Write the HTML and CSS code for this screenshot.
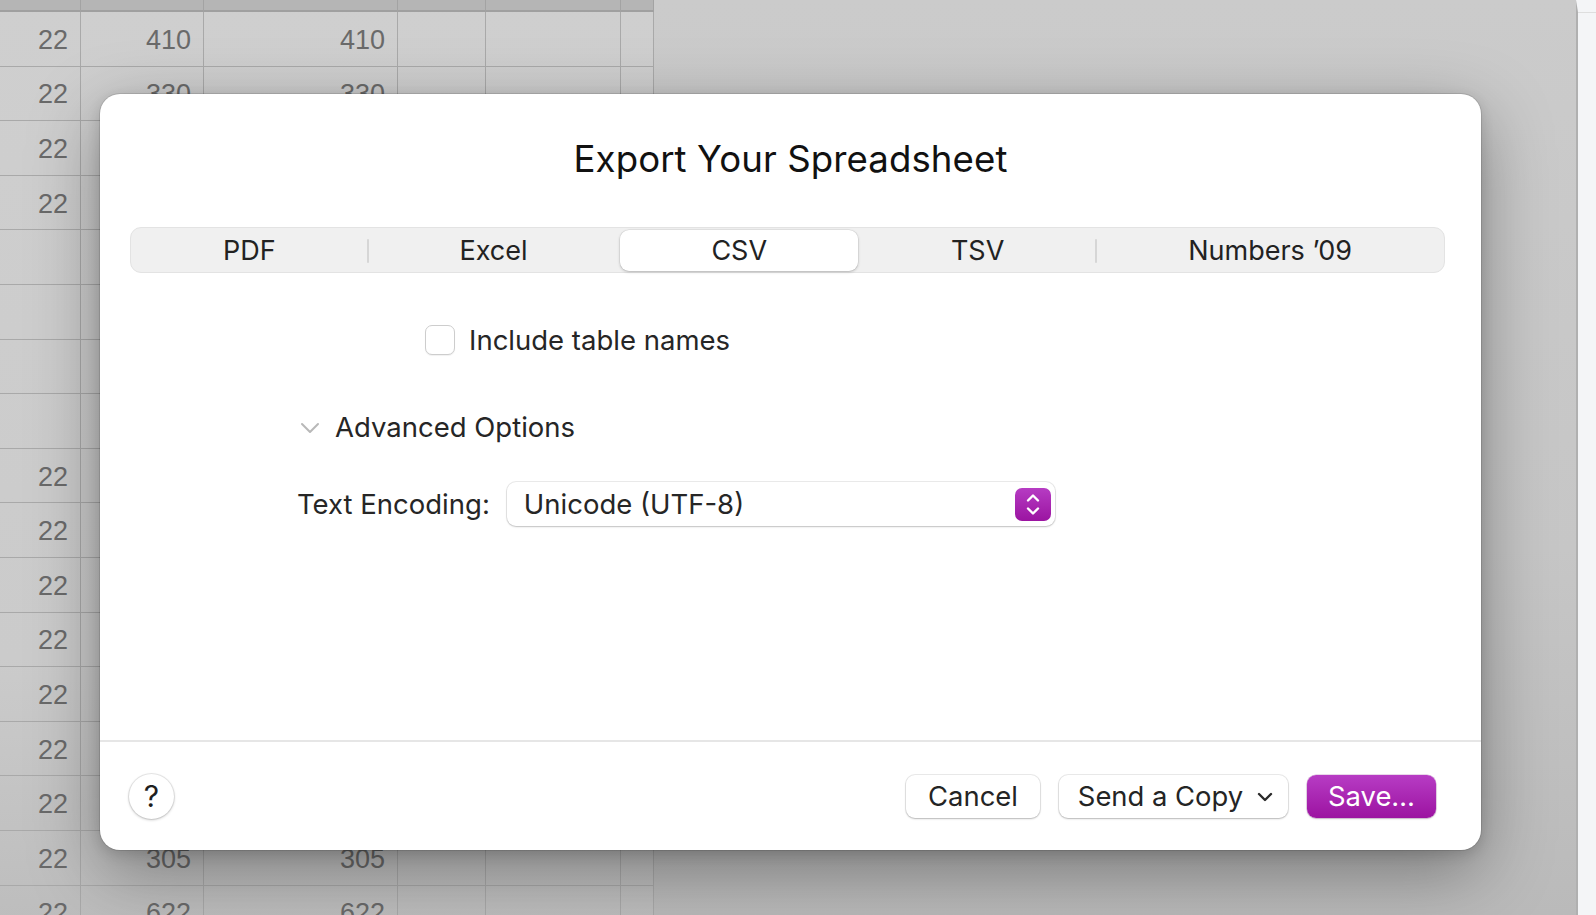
FILE: index.html
```html
<!DOCTYPE html>
<html lang="en">
<head>
<meta charset="utf-8">
<title>Export Your Spreadsheet</title>
<link rel="stylesheet" href="styles.css">
</head>
<body>
<div class="screen">
  <div class="workspace">
    <div class="sheet">
      <div class="hcell"></div><div class="hcell"></div><div class="hcell"></div><div class="hcell"></div><div class="hcell"></div><div class="hcell"></div>

      <div class="cell">22</div><div class="cell">410</div><div class="cell">410</div><div class="cell"></div><div class="cell"></div><div class="cell"></div>
      <div class="cell">22</div><div class="cell">330</div><div class="cell">330</div><div class="cell"></div><div class="cell"></div><div class="cell"></div>
      <div class="cell">22</div><div class="cell"></div><div class="cell"></div><div class="cell"></div><div class="cell"></div><div class="cell"></div>
      <div class="cell">22</div><div class="cell"></div><div class="cell"></div><div class="cell"></div><div class="cell"></div><div class="cell"></div>
      <div class="cell"></div><div class="cell"></div><div class="cell"></div><div class="cell"></div><div class="cell"></div><div class="cell"></div>
      <div class="cell"></div><div class="cell"></div><div class="cell"></div><div class="cell"></div><div class="cell"></div><div class="cell"></div>
      <div class="cell"></div><div class="cell"></div><div class="cell"></div><div class="cell"></div><div class="cell"></div><div class="cell"></div>
      <div class="cell"></div><div class="cell"></div><div class="cell"></div><div class="cell"></div><div class="cell"></div><div class="cell"></div>
      <div class="cell">22</div><div class="cell"></div><div class="cell"></div><div class="cell"></div><div class="cell"></div><div class="cell"></div>
      <div class="cell">22</div><div class="cell"></div><div class="cell"></div><div class="cell"></div><div class="cell"></div><div class="cell"></div>
      <div class="cell">22</div><div class="cell"></div><div class="cell"></div><div class="cell"></div><div class="cell"></div><div class="cell"></div>
      <div class="cell">22</div><div class="cell"></div><div class="cell"></div><div class="cell"></div><div class="cell"></div><div class="cell"></div>
      <div class="cell">22</div><div class="cell"></div><div class="cell"></div><div class="cell"></div><div class="cell"></div><div class="cell"></div>
      <div class="cell">22</div><div class="cell"></div><div class="cell"></div><div class="cell"></div><div class="cell"></div><div class="cell"></div>
      <div class="cell">22</div><div class="cell"></div><div class="cell"></div><div class="cell"></div><div class="cell"></div><div class="cell"></div>
      <div class="cell">22</div><div class="cell">305</div><div class="cell">305</div><div class="cell"></div><div class="cell"></div><div class="cell"></div>
      <div class="cell">22</div><div class="cell">622</div><div class="cell">622</div><div class="cell"></div><div class="cell"></div><div class="cell"></div>
    </div>

    <div class="dialog">
      <h1 class="title">Export Your Spreadsheet</h1>

      <div class="segmented">
        <div class="seg">PDF</div>
        <span class="sep"></span>
        <div class="seg">Excel</div>
        <span class="sep hidden"></span>
        <div class="seg selected">CSV</div>
        <span class="sep hidden"></span>
        <div class="seg">TSV</div>
        <span class="sep"></span>
        <div class="seg">Numbers ’09</div>
      </div>

      <div class="options">
        <label class="check-row">
          <span class="checkbox"></span>
          <span class="check-label">Include table names</span>
        </label>

        <div class="disclosure-row">
          <svg class="disclosure" width="20" height="12" viewBox="0 0 20 12"><path d="M2 2 L10 10 L18 2" fill="none" stroke="#b8b8b8" stroke-width="2" stroke-linecap="round" stroke-linejoin="round"/></svg>
          <span class="disclosure-label">Advanced Options</span>
        </div>

        <div class="encoding-row">
          <span class="field-label">Text Encoding:</span>
          <div class="popup">
            <span class="popup-value">Unicode (UTF-8)</span>
            <span class="stepper">
              <svg width="36" height="33" viewBox="0 0 36 33"><path d="M13 12.5 L18 7.5 L23 12.5" fill="none" stroke="#fff" stroke-width="2.4" stroke-linecap="round" stroke-linejoin="round"/><path d="M13 20.5 L18 25.5 L23 20.5" fill="none" stroke="#fff" stroke-width="2.4" stroke-linecap="round" stroke-linejoin="round"/></svg>
            </span>
          </div>
        </div>
      </div>

      <div class="footer">
        <div class="help">?</div>
        <div class="actions">
          <div class="btn cancel">Cancel</div>
          <div class="btn send">Send a Copy
            <svg class="btn-chevron" width="16" height="10" viewBox="0 0 16 10"><path d="M2 2 L8 8 L14 2" fill="none" stroke="#2a2a2a" stroke-width="2.4" stroke-linecap="round" stroke-linejoin="round"/></svg>
          </div>
          <div class="btn primary">Save…</div>
        </div>
      </div>
    </div>
  </div>
  <div class="scrollbar"></div>
</div>
</body>
</html>
```

FILE: styles.css
```css
* { box-sizing: border-box; }

html, body {
  margin: 0;
  padding: 0;
  width: 1596px;
  height: 915px;
  overflow: hidden;
}

body {
  font-family: Inter, "Liberation Sans", sans-serif;
  color: #262626;
}

.screen {
  display: flex;
  width: 1596px;
  height: 915px;
  overflow: hidden;
}

.workspace {
  position: relative;
  flex: 1;
  height: 915px;
  overflow: hidden;
  background: linear-gradient(180deg, #cbcbcb 0%, #c6c6c6 60%, #bababa 100%);
}

/* ---------- spreadsheet behind ---------- */
.sheet {
  display: grid;
  grid-template-columns: 81px 123px 194px 88px 135px 33px;
  grid-auto-rows: 54.6px;
  grid-template-rows: 12px;
  width: 654px;
  background: linear-gradient(180deg, #cfcfcf 0%, #cbcbcb 70%, #bcbcbc 100%);
  font-family: "Liberation Sans", Arial, sans-serif;
}

.hcell {
  background: #b5b5b5;
  border-right: 1px solid #a3a3a3;
  border-bottom: 2px solid #a0a0a0;
}

.cell {
  display: flex;
  align-items: center;
  justify-content: flex-end;
  padding: 3px 12px 0 0;
  font-size: 27px;
  color: #6a6a6a;
  border-right: 1px solid #a9a9a9;
  border-bottom: 1px solid #a9a9a9;
}

/* ---------- right scroll strip ---------- */
.scrollbar {
  width: 20px;
  height: 915px;
  background: #f4f5f7;
  border-left: 2px solid #b0b0b0;
  border-top: 12px solid #f4f5f7;
  box-shadow: inset 0 1px 0 #dedede;
}

/* ---------- dialog ---------- */
.dialog {
  position: absolute;
  left: 100px;
  top: 94px;
  width: 1381px;
  height: 756px;
  background: #ffffff;
  border-radius: 20px;
  box-shadow: 0 0 0 1px rgba(0, 0, 0, 0.10), 0 22px 70px rgba(0, 0, 0, 0.36), 0 4px 14px rgba(0, 0, 0, 0.14);
  display: flex;
  flex-direction: column;
}

.title {
  margin: 43px 0 0;
  height: 44px;
  line-height: 44px;
  text-align: center;
  font-size: 36.6px;
  font-weight: 400;
  color: #111111;
  letter-spacing: 0.1px;
}

.segmented {
  margin: 46px 36px 0 30px;
  height: 46px;
  display: flex;
  align-items: center;
  padding: 2px 1px 1px;
  background: #f0f0f0;
  border: 1px solid #e3e3e3;
  border-radius: 11px;
}

.seg {
  flex: 1 1 auto;
  height: 100%;
  display: flex;
  align-items: center;
  justify-content: center;
  padding: 0 60px;
  font-size: 27px;
  color: #222222;
  border-radius: 9px;
}

.seg.selected {
  background: #ffffff;
  box-shadow: 0 0 0 0.5px rgba(0, 0, 0, 0.08), 0 1px 3px rgba(0, 0, 0, 0.22);
}

.sep {
  flex: none;
  width: 2px;
  height: 24px;
  background: #d6d6d6;
  border-radius: 1px;
}

.sep.hidden { background: transparent; }

.options {
  flex: 1;
  display: flex;
  flex-direction: column;
  padding-top: 52px;
}

.check-row {
  display: flex;
  align-items: center;
  height: 30px;
  margin-left: 325px;
  gap: 14px;
}

.checkbox {
  width: 30px;
  height: 30px;
  border-radius: 7px;
  background: #ffffff;
  border: 1px solid #cdcdcd;
  box-shadow: 0 1px 1px rgba(0, 0, 0, 0.06);
}

.check-label,
.disclosure-label,
.field-label,
.popup-value {
  font-size: 27.5px;
  color: #262626;
}

.disclosure-row {
  display: flex;
  align-items: center;
  height: 34px;
  margin-top: 55px;
  margin-left: 200px;
  gap: 15px;
}

.disclosure { flex: none; margin-top: 2px; }

.encoding-row {
  display: flex;
  align-items: center;
  height: 44px;
  margin-top: 38px;
  margin-left: 197px;
  gap: 17px;
}

.popup {
  width: 548px;
  height: 44px;
  display: flex;
  align-items: center;
  justify-content: space-between;
  padding: 0 4px 0 17px;
  background: #ffffff;
  border-radius: 9px;
  box-shadow: 0 0 0 1px rgba(0, 0, 0, 0.08), 0 1px 2px rgba(0, 0, 0, 0.18);
}

.stepper {
  width: 36px;
  height: 33px;
  border-radius: 7px;
  background: linear-gradient(180deg, #b63cc3 0%, #9b14a1 100%);
  display: flex;
}

.footer {
  height: 110px;
  border-top: 2px solid #e6e6e6;
  display: flex;
  align-items: center;
  justify-content: space-between;
  padding: 0 45px 0 29px;
}

.help {
  width: 45px;
  height: 45px;
  border-radius: 50%;
  background: #ffffff;
  box-shadow: 0 0 0 1px rgba(0, 0, 0, 0.08), 0 1px 3px rgba(0, 0, 0, 0.22);
  display: flex;
  align-items: center;
  justify-content: center;
  font-size: 30px;
  font-weight: 400;
  color: #1f1f1f;
}

.actions {
  display: flex;
  align-items: center;
  gap: 19px;
}

.btn {
  height: 43px;
  display: flex;
  align-items: center;
  justify-content: center;
  border-radius: 9px;
  font-size: 27.4px;
  color: #242424;
  background: #ffffff;
  box-shadow: 0 0 0 1px rgba(0, 0, 0, 0.08), 0 1px 2px rgba(0, 0, 0, 0.22);
}

.btn.cancel { width: 134px; }

.btn.send {
  width: 229px;
  gap: 14px;
  padding-left: 4px;
}

.btn-chevron { flex: none; margin-top: 2px; }

.btn.primary {
  width: 129px;
  color: #ffffff;
  background: linear-gradient(180deg, #b73cc4 0%, #9c13a1 100%);
  box-shadow: 0 0 0 0.5px rgba(120, 0, 130, 0.3), 0 1px 2px rgba(0, 0, 0, 0.18);
}
```
